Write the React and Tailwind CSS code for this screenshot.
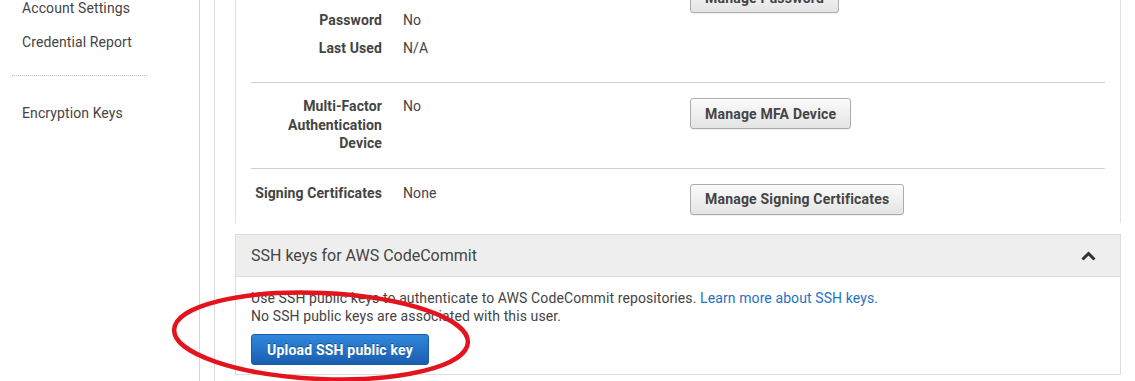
import React from 'react';

const font = { fontFamily: 'Roboto, "Liberation Sans", sans-serif' };

const GrayButton = ({ children, className = '' }) => (
  <button
    className={`h-[31px] px-[14px] rounded-[3px] border border-[#acacac] bg-gradient-to-b from-[#fbfbfb] to-[#e4e4e4] text-[14px] font-bold tracking-[0.2px] text-[#444] leading-none shadow-[0_1px_0_rgba(0,0,0,0.06)] ${className}`}
  >
    {children}
  </button>
);

const Sidebar = () => (
  <div className="w-[200px] shrink-0 border-r border-[#d5d5d5] text-[14px] text-[#444]">
    <div className="pl-[22px] -mt-[2px]">
      <div className="leading-[20px] h-[34px]">Account Settings</div>
      <div className="leading-[20px]">Credential Report</div>
    </div>
    <div className="ml-[12px] w-[135px] mt-[23px] border-t border-dotted border-[#bbb]" />
    <div className="pl-[22px] mt-[27px] leading-[20px]">Encryption Keys</div>
  </div>
);

export default function App() {
  return (
    <div className="relative w-[1135px] h-[381px] overflow-hidden bg-white tracking-[0.1px]" style={font}>
      <div className="flex h-full">
        <Sidebar />
        <div className="w-[14px] shrink-0" />
        <div className="flex-1 border-l border-[#dcdcdc] pl-[20px] pr-[14px]">
          {/* credentials panel */}
          <div className="border-x border-[#e2e2e2] px-[15px] h-[223px]">
            <div className="flex items-start border-b border-[#cfcfcf] h-[83px]">
              <div className="w-[439px] pt-[11px] grid grid-cols-[131px_1fr] gap-x-[21px] gap-y-[10px] text-[14px] leading-[18px] text-[#444]">
                <div className="text-right font-bold">Password</div>
                <div>No</div>
                <div className="text-right font-bold">Last Used</div>
                <div>N/A</div>
              </div>
              <GrayButton className="-mt-[18px]">Manage Password</GrayButton>
            </div>

            <div className="flex items-start border-b border-[#cfcfcf] pt-[14px] pb-[15px]">
              <div className="w-[439px] grid grid-cols-[131px_1fr] gap-x-[21px] text-[14px] leading-[18.5px] text-[#444]">
                <div className="text-right font-bold">Multi-Factor Authentication Device</div>
                <div>No</div>
              </div>
              <GrayButton className="mt-px">Manage MFA Device</GrayButton>
            </div>

            <div className="flex items-start pt-[15px]">
              <div className="w-[439px] grid grid-cols-[131px_1fr] gap-x-[21px] text-[14px] leading-[18px] text-[#444]">
                <div className="text-right font-bold whitespace-nowrap">Signing Certificates</div>
                <div>None</div>
              </div>
              <GrayButton>Manage Signing Certificates</GrayButton>
            </div>
          </div>

          {/* SSH keys panel */}
          <div className="mt-[11px] border border-[#dddddd]">
            <div className="h-[42px] bg-[#eeeeee] border-b border-[#dddddd] flex items-center justify-between pl-[15px] pr-[24px]">
              <span className="text-[16px] text-[#444] tracking-normal">SSH keys for AWS CodeCommit</span>
              <svg width="15" height="10" viewBox="0 0 15 10" fill="none">
                <polyline points="1.5,8.5 7.5,2.5 13.5,8.5" stroke="#333" strokeWidth="3" />
              </svg>
            </div>
            <div className="px-[15px] pt-[12px] pb-[9px] text-[14px] leading-[18px] text-[#444]">
              <p>
                Use SSH public keys to authenticate to AWS CodeCommit repositories.{' '}
                <a className="text-[#1f72c4]">Learn more about SSH keys.</a>
              </p>
              <p>No SSH public keys are associated with this user.</p>
              <button className="mt-[9px] h-[31px] px-[15px] rounded-[3px] border border-[#1b5aa6] bg-gradient-to-b from-[#3088dc] to-[#1a5db0] text-white text-[14px] font-bold tracking-[0.2px] leading-none [text-shadow:0_-1px_0_rgba(0,0,0,0.35)]">
                Upload SSH public key
              </button>
            </div>
          </div>
        </div>
      </div>

      {/* red annotation */}
      <svg className="absolute inset-0 pointer-events-none" width="1135" height="381" viewBox="0 0 1135 381">
        <ellipse cx="321" cy="336" rx="147" ry="43" transform="rotate(2.5 321 336)" fill="none" stroke="#e3141d" strokeWidth="4.5" />
      </svg>
    </div>
  );
}
